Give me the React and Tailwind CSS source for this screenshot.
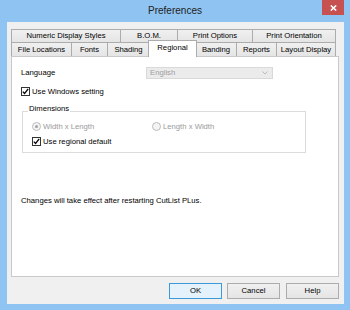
import React from "react";

const Tab = ({ w, children, last }) => (
  <div
    className={`h-full flex items-center justify-center border-t border-l border-[#acacac] bg-gradient-to-b from-[#f0f0f0] to-[#e5e5e5] text-black whitespace-nowrap ${last ? "border-r" : ""}`}
    style={{ width: w }}
  >
    {children}
  </div>
);

const Check = () => (
  <div className="w-[9px] h-[9px] border border-[#333333] bg-white flex items-center justify-center shrink-0">
    <svg width="7" height="7" viewBox="0 0 7 7">
      <path d="M0.8 3.6 L2.6 5.5 L6.2 0.9" fill="none" stroke="#000" strokeWidth="1.3" />
    </svg>
  </div>
);

const Btn = ({ children, def }) => (
  <div
    className={`w-[53px] h-[16px] flex items-center justify-center border ${def ? "border-[#3c99dc] bg-[#e5f1fb]" : "border-[#acacac] bg-gradient-to-b from-[#f0f0f0] to-[#e5e5e5]"} text-black`}
  >
    {children}
  </div>
);

export default function App() {
  return (
    <div className="w-[350px] h-[310px] bg-[#8fc3f1] flex flex-col font-['Liberation_Sans',Arial,sans-serif] text-[7.7px] leading-none overflow-hidden">
      {/* title bar */}
      <div className="h-[22px] grid grid-cols-[1fr_auto_1fr] shrink-0">
        <div />
        <div className="text-[10px] leading-[22px] text-[#222]">Preferences</div>
        <div className="flex justify-end items-start pr-[6px]">
          <div className="w-[22px] h-[15px] bg-[#c75050] flex items-center justify-center">
            <svg width="7" height="6" viewBox="0 0 7 6">
              <path d="M0.8 0.5 L6.2 5.5 M6.2 0.5 L0.8 5.5" stroke="#fff" strokeWidth="1.6" />
            </svg>
          </div>
        </div>
      </div>

      {/* client */}
      <div className="ml-[7px] mr-[6px] h-[282px] bg-[#f0f0f0] flex flex-col shrink-0">
        <div className="ml-[4px] mt-[7px] w-[328px] flex flex-col">
          {/* row 1 */}
          <div className="h-[13px] flex">
            <Tab w={109}>Numeric Display Styles</Tab>
            <Tab w={57}>B.O.M.</Tab>
            <Tab w={75}>Print Options</Tab>
            <Tab w={84} last>Print Orientation</Tab>
          </div>
          {/* row 2 */}
          <div className="h-[14px] flex items-start">
            <Tab w={60}>File Locations</Tab>
            <Tab w={36}>Fonts</Tab>
            <Tab w={42}>Shading</Tab>
            <div className="relative z-10 w-[49px] -ml-[1px] -mr-[2px] -mt-[2px] h-[17px] shrink-0 bg-white border-t border-l border-r border-[#acacac] flex items-center justify-center pb-[3px] text-black">
              Regional
            </div>
            <Tab w={41}>Banding</Tab>
            <Tab w={40}>Reports</Tab>
            <Tab w={60} last>Layout Display</Tab>
          </div>
          {/* panel */}
          <div className="h-[221px] bg-white border border-[#c9c9c9] flex flex-col pl-[9px] pt-[10px] text-black">
            <div className="h-[12px] flex items-center">
              <div className="w-[125px]">Language</div>
              <div className="w-[127px] h-[12px] border border-[#d9d9d9] bg-[#ebebeb] flex items-center justify-between pl-[3px] pr-[4px] text-[#a0a0a0]">
                <span>English</span>
                <svg width="6" height="4" viewBox="0 0 6 4">
                  <path d="M0.5 0.5 L3 3 L5.5 0.5" fill="none" stroke="#b5b5b5" strokeWidth="0.9" />
                </svg>
              </div>
            </div>
            <div className="mt-[8px] h-[9px] flex items-center gap-[2px]">
              <Check />
              <span>Use Windows setting</span>
            </div>
            {/* group box */}
            <div className="mt-[15px] ml-[1px] w-[284px] border border-[#dcdcdc] flex flex-col pl-[9px] pb-[6px]">
              <div className="-mt-[7px] h-[8px] leading-[8px] -ml-[4px] self-start bg-white px-[1px]">Dimensions</div>
              <div className="mt-[9px] h-[9px] flex items-center text-[#9a9a9a]">
                <div className="w-[120px] flex items-center gap-[2px]">
                  <div className="w-[9px] h-[9px] rounded-full border border-[#bcbcbc] bg-[#f4f4f4] flex items-center justify-center shrink-0">
                    <div className="w-[3px] h-[3px] rounded-full bg-[#a0a0a0]" />
                  </div>
                  <span>Width x Length</span>
                </div>
                <div className="flex items-center gap-[2px]">
                  <div className="w-[9px] h-[9px] rounded-full border border-[#bcbcbc] bg-[#f4f4f4] shrink-0" />
                  <span>Length x Width</span>
                </div>
              </div>
              <div className="mt-[6px] h-[9px] flex items-center gap-[2px]">
                <Check />
                <span>Use regional default</span>
              </div>
            </div>
            <div className="mt-[43px] leading-[10px]">Changes will take effect after restarting CutList PLus.</div>
          </div>
        </div>
        {/* buttons */}
        <div className="mt-[6px] flex justify-end gap-[5px] pr-[5px]">
          <Btn def>OK</Btn>
          <Btn>Cancel</Btn>
          <div className="ml-[1px]">
            <Btn>Help</Btn>
          </div>
        </div>
      </div>
    </div>
  );
}
